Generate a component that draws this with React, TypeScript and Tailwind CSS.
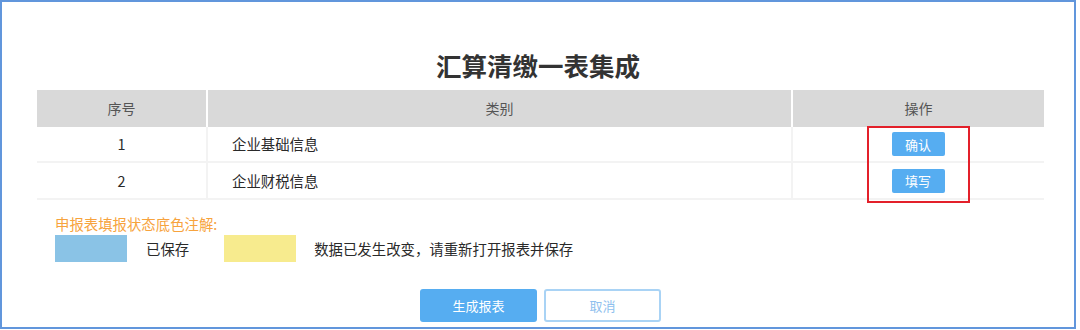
import React from "react";

const font = { fontFamily: '"Noto Sans CJK SC", "Noto Sans", sans-serif' };

export default function App() {
  const rows = [
    { no: "1", name: "企业基础信息", action: "确认", h: "h-[36px]" },
    { no: "2", name: "企业财税信息", action: "填写", h: "h-[37px]" },
  ];
  return (
    <div className="w-[1080px] h-[330px] bg-white" style={font}>
      <div className="relative w-[1076px] h-[329px] border-2 border-[#6196dc] bg-white">
        <div className="h-[88px] pt-[38px] flex items-center justify-center">
          <h1 className="text-[25.5px] leading-[36px] font-bold text-[#333]">汇算清缴一表集成</h1>
        </div>
        <div className="ml-[35px] w-[1007px]">
          <div className="flex h-[37px] bg-[#d9d9d9] text-[14px] text-[#555]">
            <div className="w-[171px] flex items-center justify-center border-r-2 border-white">序号</div>
            <div className="w-[585px] flex items-center justify-center border-r-2 border-white">类别</div>
            <div className="flex-1 flex items-center justify-center">操作</div>
          </div>
          {rows.map((r) => (
            <div key={r.no} className={`flex ${r.h} border-b-2 border-[#f3f3f3] text-[14.4px] text-[#2a2a2a]`}>
              <div className="w-[171px] flex items-center justify-center border-r-2 border-[#f3f3f3]">{r.no}</div>
              <div className="w-[585px] flex items-center pl-[24px] border-r-2 border-[#f3f3f3]">{r.name}</div>
              <div className="flex-1 flex items-center justify-center pr-[1px]">
                <button className="w-[53px] h-[24px] bg-[#56adf1] text-white text-[13px] leading-none rounded-[2px]">
                  {r.action}
                </button>
              </div>
            </div>
          ))}
        </div>
        <div className="ml-[53px] mt-[14px] text-[14.4px] leading-[20px] text-[#f7a33d]">申报表填报状态底色注解:</div>
        <div className="ml-[53px] mt-[1px] flex items-center h-[27px] text-[14.4px] text-[#2a2a2a]">
          <div className="w-[72px] h-[27px] bg-[#8ac3e6]" />
          <span className="ml-[19px]">已保存</span>
          <div className="ml-[35px] w-[72px] h-[27px] bg-[#f7eb8e]" />
          <span className="ml-[18px]">数据已发生改变，请重新打开报表并保存</span>
        </div>
        <div className="ml-[418px] mt-[27px] flex gap-[7px]">
          <button className="w-[117px] h-[33px] rounded-[3px] bg-[#56adf1] text-white text-[13px]">生成报表</button>
          <button className="w-[117px] h-[33px] rounded-[3px] border-2 border-[#a9d3f5] bg-white text-[#8fc0ee] text-[13px]">取消</button>
        </div>
        <div className="absolute left-[865px] top-[124px] w-[103px] h-[77px] border-2 border-[#e3202a]" />
      </div>
    </div>
  );
}
